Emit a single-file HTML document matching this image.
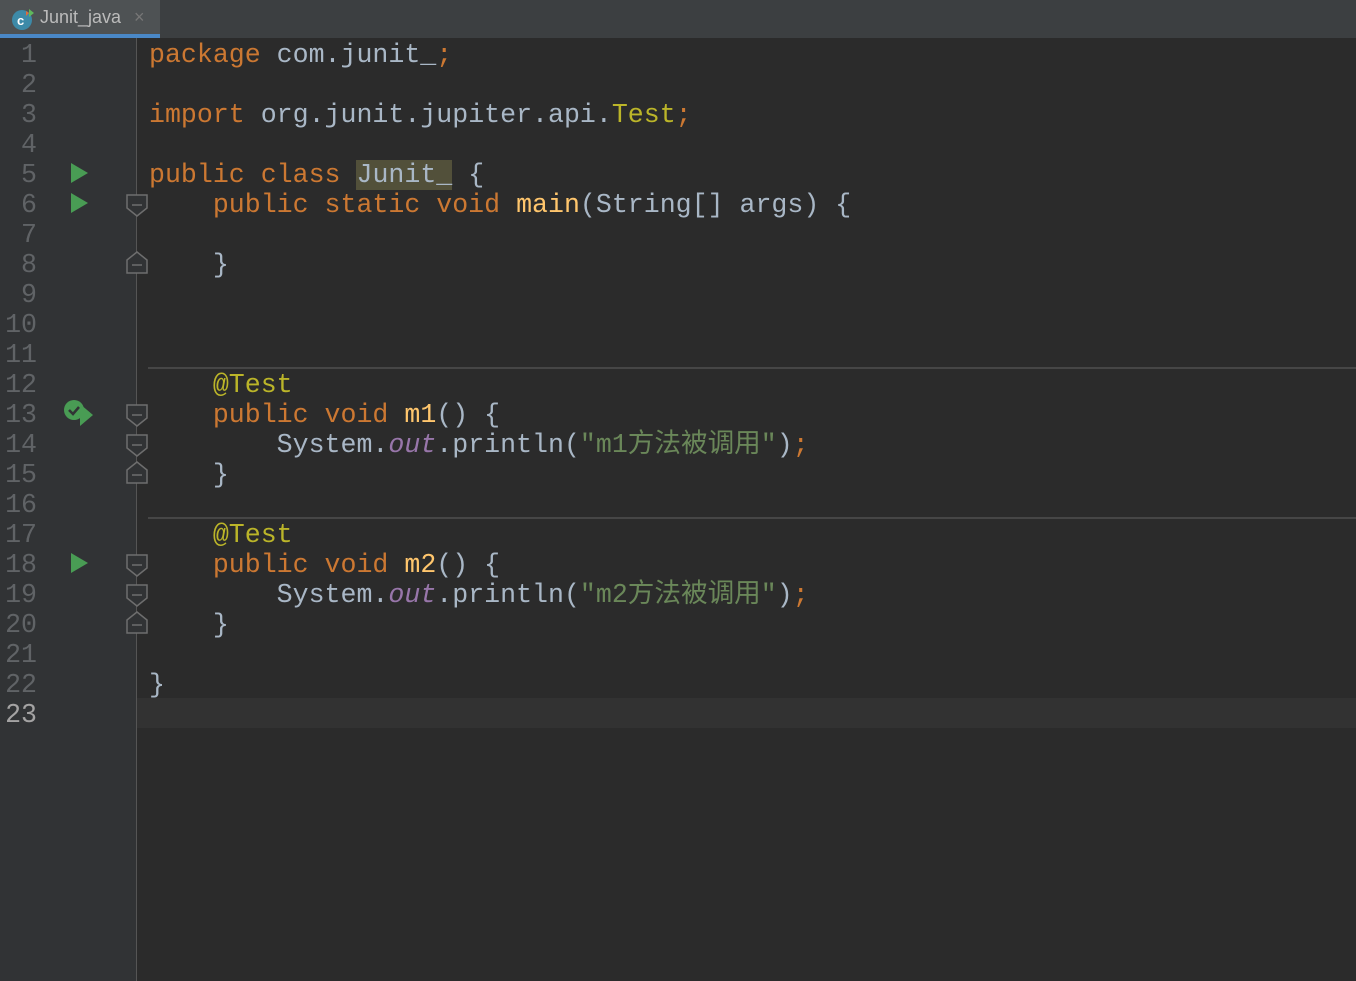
<!DOCTYPE html>
<html><head><meta charset="utf-8"><style>
body{margin:0;width:1356px;height:981px;background:#2b2b2b;overflow:hidden;position:relative;font-family:"Liberation Mono","Noto Sans CJK SC",monospace;}
.tabbar{position:absolute;left:0;top:0;width:1356px;height:38px;background:#3c3f41;}
.tab{position:absolute;left:0;top:0;width:160px;height:34px;background:#4e5254;border-bottom:4px solid #4a88c7;}
.tab span{position:absolute;left:40px;top:7px;font:18px "Liberation Sans",sans-serif;color:#bbbbbb;}
.gutter{position:absolute;left:0;top:38px;width:136px;height:943px;background:#313335;border-right:1px solid #555;}
.cur{position:absolute;left:137px;top:698px;width:1219px;height:30px;background:#323232;}
.ln{position:absolute;left:0;width:37px;text-align:right;font-size:26.6px;line-height:30px;color:#606366;margin-top:2px;}
.l{position:absolute;left:149px;font-size:26.6px;line-height:30px;color:#a9b7c6;white-space:pre;margin-top:2px;}
.k{color:#cc7832}.a{color:#bbb529}.m{color:#ffc66d}.s{color:#6a8759}.o{color:#9876aa;font-style:italic}
.sep{position:absolute;left:148px;width:1208px;height:2px;background:#464646;}
.hl{background:#52503a}
</style></head><body>
<div class="tabbar"><div class="tab">
<svg style="position:absolute;left:11px;top:7px" width="24" height="24"><circle cx="11" cy="13" r="10" fill="#3d8aa8"/><text x="6" y="18" font-family="Liberation Sans" font-size="13" font-weight="bold" fill="#fff">c</text><path d="M18 2l5 4-5 4z" fill="#5fb85c"/><path d="M15 4l3 2-3 3z" fill="#e06c3a"/></svg>
<span>Junit_java</span><span style="left:134px;color:#777">×</span></div></div>
<div class="gutter"></div>
<div class="cur"></div>
<div class="sep" style="top:367px"></div>
<div class="sep" style="top:517px"></div>
<div id="nums"></div>
<script>
let h='';for(let i=1;i<=23;i++){h+=`<div class="ln" style="top:${38+(i-1)*30}px;${i==23?'color:#a4a3a3':''}">${i}</div>`;}
document.getElementById('nums').innerHTML=h;
</script>
<div class="l" style="top:38px"><span class="k">package</span> com.junit_<span class="k">;</span></div>
<div class="l" style="top:98px"><span class="k">import</span> org.junit.jupiter.api.<span class="a">Test</span><span class="k">;</span></div>
<div class="l" style="top:158px"><span class="k">public class</span> <span class="hl">Junit_</span> {</div>
<div class="l" style="top:188px">    <span class="k">public static void</span> <span class="m">main</span>(String[] args) {</div>
<div class="l" style="top:248px">    }</div>
<div class="l" style="top:368px">    <span class="a">@Test</span></div>
<div class="l" style="top:398px">    <span class="k">public void</span> <span class="m">m1</span>() {</div>
<div class="l" style="top:428px">        System.<span class="o">out</span>.println(<span class="s">"m1方法被调用"</span>)<span class="k">;</span></div>
<div class="l" style="top:458px">    }</div>
<div class="l" style="top:518px">    <span class="a">@Test</span></div>
<div class="l" style="top:548px">    <span class="k">public void</span> <span class="m">m2</span>() {</div>
<div class="l" style="top:578px">        System.<span class="o">out</span>.println(<span class="s">"m2方法被调用"</span>)<span class="k">;</span></div>
<div class="l" style="top:608px">    }</div>
<div class="l" style="top:668px">}</div>
<svg style="position:absolute;left:0;top:0" width="160" height="700">
<g fill="#499c54"><path d="M71 163v20l17-10z"/><path d="M71 193v20l17-10z"/><path d="M71 553v20l17-10z"/>
<circle cx="74" cy="410" r="10"/><path d="M80 404v22l13-11z"/></g>
<path d="M69 410l4 4 6-7" stroke="#313335" stroke-width="2.5" fill="none"/>
<g stroke="#6e6e6e" stroke-width="1.5" fill="#313335">
<path d="M127 195h20v13l-10 8-10-8z"/><path d="M127 273h20v-13l-10-8-10 8z"/>
<path d="M127 405h20v13l-10 8-10-8z"/><path d="M127 435h20v13l-10 8-10-8z"/><path d="M127 483h20v-13l-10-8-10 8z"/>
<path d="M127 555h20v13l-10 8-10-8z"/><path d="M127 585h20v13l-10 8-10-8z"/><path d="M127 633h20v-13l-10-8-10 8z"/>
</g>
<g stroke="#6e6e6e" stroke-width="1.5"><path d="M132 205h10M132 265h10M132 415h10M132 445h10M132 475h10M132 565h10M132 595h10M132 625h10"/></g>
<g stroke="#3f3f3f" stroke-width="1.5"><path d="M208 430v26M208 580v26"/></g>
</svg>
</body></html>
